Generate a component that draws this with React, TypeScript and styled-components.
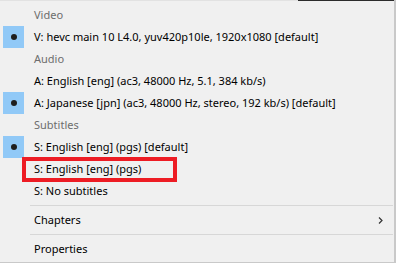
import styled, { createGlobalStyle } from 'styled-components'

const GlobalStyle = createGlobalStyle`
  html,
  body {
    margin: 0;
    padding: 0;
    background: #f0f0f0;
  }

  body {
    font-family: 'Noto Sans', 'Open Sans', sans-serif;
    font-size: 11px;
  }
`

const StyledMenu = styled.div`
  display: flex;
  flex-direction: column;
  box-sizing: border-box;
  width: 396px;
  height: 263px;
  background: #f0f0f0;
  border-right: 2px solid #c9c9c9;
  border-bottom: 1px solid #c9c9c9;
`

const TopEdge = styled.div`
  display: grid;
  grid-template-columns: 298px 1fr;
  height: 1px;
  margin-bottom: 3px;

  span:first-child {
    background: #e2e2e2;
  }

  span:last-child {
    background: #2b2b2b;
  }
`

const StyledRow = styled.div<{ $header?: boolean }>`
  display: flex;
  align-items: center;
  height: 22px;
  flex-shrink: 0;
  color: ${({ $header }) => ($header ? '#6d6d6d' : '#000')};
  white-space: nowrap;
`

const Gutter = styled.div<{ $checked?: boolean }>`
  display: flex;
  align-items: center;
  justify-content: center;
  width: 21px;
  height: 22px;
  margin: 0 10px 0 3px;
  background: ${({ $checked }) => ($checked ? '#91c9f7' : 'transparent')};

  &::after {
    content: '';
    display: ${({ $checked }) => ($checked ? 'block' : 'none')};
    width: 6px;
    height: 6px;
    border-radius: 50%;
    background: #1e1e1e;
  }
`

const Label = styled.span<{ $marked?: boolean }>`
  position: relative;
  flex: 1;
  line-height: 22px;

  &::after {
    content: '';
    display: ${({ $marked }) => ($marked ? 'block' : 'none')};
    position: absolute;
    left: -12px;
    top: -1px;
    width: 155px;
    height: 25px;
    box-sizing: border-box;
    border: 4px solid #ed1c24;
  }
`

const Chevron = styled.svg`
  width: 5px;
  height: 7px;
  margin-right: 11px;
`

const Separator = styled.hr`
  flex-shrink: 0;
  height: 1px;
  margin: 3px 1px 3px 30px;
  border: 0;
  background: #d7d7d7;
`

const rows = [
  { text: 'Video', header: true },
  { text: 'V: hevc main 10 L4.0, yuv420p10le, 1920x1080 [default]', checked: true },
  { text: 'Audio', header: true },
  { text: 'A: English [eng] (ac3, 48000 Hz, 5.1, 384 kb/s)' },
  { text: 'A: Japanese [jpn] (ac3, 48000 Hz, stereo, 192 kb/s) [default]', checked: true },
  { text: 'Subtitles', header: true },
  { text: 'S: English [eng] (pgs) [default]', checked: true },
  { text: 'S: English [eng] (pgs)', marked: true },
  { text: 'S: No subtitles' },
]

function App() {
  return (
    <>
      <GlobalStyle />
      <StyledMenu>
        <TopEdge>
          <span />
          <span />
        </TopEdge>
        {rows.map(row => (
          <StyledRow key={row.text} $header={row.header}>
            <Gutter $checked={row.checked} />
            <Label $marked={row.marked}>{row.text}</Label>
          </StyledRow>
        ))}
        <Separator />
        <StyledRow>
          <Gutter />
          <Label>Chapters</Label>
          <Chevron viewBox="0 0 5 7">
            <path d="M1 0.5 L4 3.5 L1 6.5" fill="none" stroke="#333" strokeWidth="1.2" />
          </Chevron>
        </StyledRow>
        <Separator />
        <StyledRow>
          <Gutter />
          <Label>Properties</Label>
        </StyledRow>
      </StyledMenu>
    </>
  )
}

export default App
